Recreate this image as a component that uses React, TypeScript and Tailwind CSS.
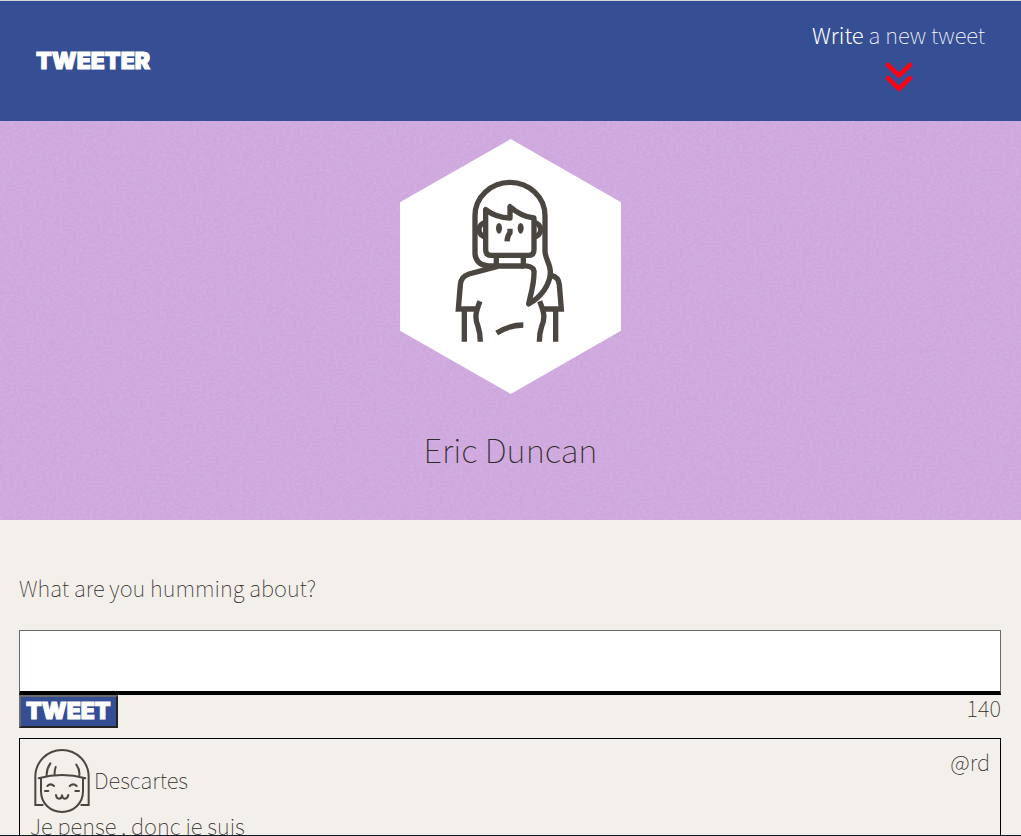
import { useState } from "react";

const MAX_LENGTH = 140;

function Portrait() {
  return (
    <svg viewBox="27 28 663 765" className="h-[255px] w-[221px]" role="img" aria-label="Profile picture">
      <path d="M359 28 690 218V603L359 793 27 603V218Z" fill="#fff" />
      <g fill="none" stroke="#4b4740" strokeWidth="16" strokeLinejoin="round">
        <path d="M290 408C268 408 252 392 252 370V258A105 100 0 0 1 462 258V365C462 385 477 400 478 425C479 464 450 502 413 523C417 500 430 465 429 426C429 413 415 408 390 408" />
        <path d="M284 240V360Q284 377 300 377H413Q429 377 429 360V265Q391 261 357 231V265Q315 264 284 240Z" />
        <path d="M284 279A20 21 0 0 0 284 321M429 279A20 21 0 0 1 429 321" />
        <path d="M316 380V404M397 380V404M285 409H400" />
        <path d="M320 410 234 433Q210 440 208 465L202 538H262M455 538H511L505 465Q503 442 481 437" strokeLinejoin="miter" />
        <path d="M267 515C253 550 251 565 261 590Q268 610 268 636M446 515C460 550 463 565 452 590Q445 610 445 636M220 540V636M494 540V636M317 610Q355 586 397 586" />
        <path d="M357 297V309Q349 318 348 335" />
      </g>
      <g fill="#4b4740">
        <ellipse cx="324" cy="296" rx="9" ry="16" />
        <ellipse cx="389" cy="296" rx="9" ry="16" />
      </g>
    </svg>
  );
}

function Avatar() {
  return (
    <svg
      viewBox="42 26 168 192"
      className="h-16 w-14 shrink-0"
      fill="none"
      stroke="#4b4740"
      strokeWidth="6"
      strokeLinecap="round"
      strokeLinejoin="round"
      aria-hidden="true"
    >
      <path d="M68 194H46V109A80 80 0 0 1 206 109V194H184" strokeLinejoin="miter" />
      <path d="M63 114V153C63 190 92 215 126 215C160 215 189 190 189 153V114" />
      <path d="M56 114Q126 94 196 114" />
      <path d="M91 69Q79 87 80 105M107 80Q103 92 104 102M169 73Q180 88 178 105" />
      <path d="M82 137Q92 127 102 137M149 137Q160 127 170 137M75 152H85M166 152H177" />
      <path d="M108 164Q109 175 117 175Q125 175 126 165Q128 175 135 175Q143 174 145 164" />
    </svg>
  );
}

function DoubleChevron() {
  return (
    <svg
      viewBox="0 0 28 30"
      className="mt-4 h-[30px] w-7"
      fill="none"
      stroke="#ff0015"
      strokeWidth="4.6"
      strokeLinecap="round"
      strokeLinejoin="round"
      aria-hidden="true"
    >
      <path d="M3 3 14 13.6 25 3M3 16.2 14 26.8 25 16.2" />
    </svg>
  );
}

function Texture() {
  return (
    <svg className="absolute inset-0 h-full w-full" aria-hidden="true">
      <filter id="weave">
        <feTurbulence type="fractalNoise" baseFrequency="0.3 0.45" numOctaves="2" seed="4" />
        <feColorMatrix values="0 0 0 0 0.72  0 0 0 0 0.5  0 0 0 0 0.88  0.7 0 0 0 -0.24" />
      </filter>
      <rect width="100%" height="100%" filter="url(#weave)" />
    </svg>
  );
}

export default function App() {
  const [text, setText] = useState("");

  return (
    <div className="h-screen overflow-hidden border-b border-[#101d29] bg-[#f3efea] font-['Noto_Sans_CJK_JP','Noto_Sans_CJK_SC',sans-serif] text-[22px] leading-6 font-thin text-[#2e2b27]">
      <nav className="flex h-[121px] items-center justify-between border-t border-[#cfd5d8] bg-[#364f94] px-9 text-white">
        <a href="#top" className="font-[Inter,sans-serif] text-[23px] font-black [-webkit-text-stroke:1px_white]">
          TWEETER
        </a>
        <a href="#compose" className="flex h-[78px] flex-col items-center">
          <span>
            <span className="font-light">Write</span> a new tweet
          </span>
          <DoubleChevron />
        </a>
      </nav>

      <header className="relative bg-[#cea8dc]">
        <Texture />
        <div className="relative flex flex-col items-center pt-[18px] pb-12">
          <Portrait />
          <h1 className="mt-8 text-[33px] leading-[46px]">Eric Duncan</h1>
        </div>
      </header>

      <main className="pt-[55px] pr-5 pl-[19px]">
        <form id="compose" onSubmit={(event) => event.preventDefault()}>
          <label htmlFor="tweet-text" className="block">
            What are you humming about?
          </label>
          <textarea
            id="tweet-text"
            value={text}
            onChange={(event) => setText(event.target.value)}
            className="mt-[31px] block h-[65px] w-full resize-none border border-b-4 border-[#6b6b6b] border-b-black bg-white px-2 outline-none"
          />
          <div className="flex items-start justify-between">
            <button
              type="submit"
              className="border-2 border-t-[#6b6b6b] border-r-[#222] border-b-[#222] border-l-[#6b6b6b] bg-[#364f94] px-[5px] font-[Inter,sans-serif] text-[23px] leading-[29px] font-black text-white [-webkit-text-stroke:1px_white]"
            >
              TWEET
            </button>
            <output htmlFor="tweet-text">{MAX_LENGTH - text.length}</output>
          </div>
        </form>

        <article className="mt-2.5 border border-black px-2.5 pt-2.5 pb-4">
          <header className="flex items-start justify-between">
            <div className="flex items-center gap-1 pl-1">
              <Avatar />
              <span className="pb-1">Descartes</span>
            </div>
            <span>@rd</span>
          </header>
          <p>Je pense , donc je suis</p>
        </article>
      </main>
    </div>
  );
}
